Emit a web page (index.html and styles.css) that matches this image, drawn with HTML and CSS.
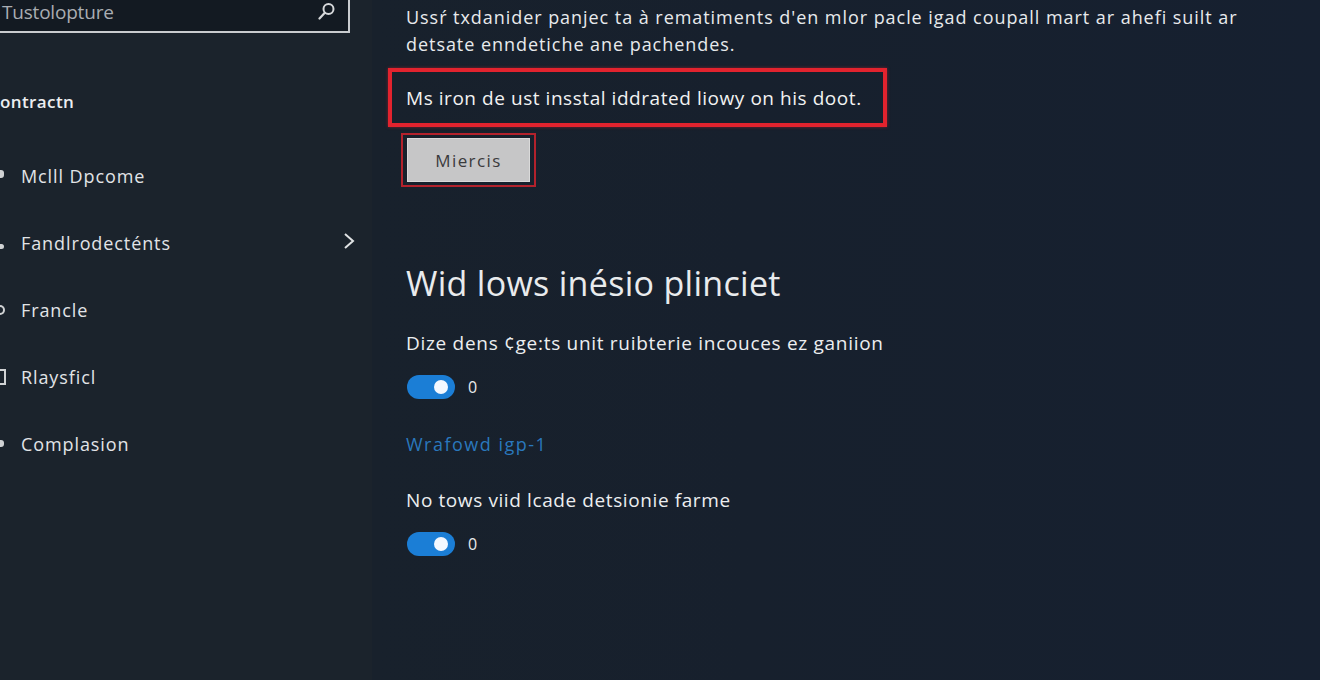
FILE: index.html
```html
<!DOCTYPE html>
<html>
<head>
<meta charset="utf-8">
<link rel="stylesheet" href="styles.css">
</head>
<body>
<div class="app">
  <aside class="sidebar">
    <div class="search">
      <span class="search-text">Tustolopture</span>
      <svg class="search-icon" width="18" height="20" viewBox="0 0 18 20"><circle cx="10.5" cy="7" r="5" fill="none" stroke="#d6d8da" stroke-width="2"/><line x1="6.8" y1="10.8" x2="1.5" y2="16.5" stroke="#d6d8da" stroke-width="2.2" stroke-linecap="round"/></svg>
    </div>
    <div class="section-title">ontractn</div>
    <nav class="nav">
      <div class="nav-item"><span class="nav-icon ic-pin"></span><span>Mclll Dpcome</span></div>
      <div class="nav-item"><span class="nav-icon ic-person"></span><span>Fandlrodecténts</span>
        <svg class="chevron" width="14" height="20" viewBox="0 0 14 20"><polyline points="3,3 11,10 3,17" fill="none" stroke="#e0e2e4" stroke-width="2"/></svg>
      </div>
      <div class="nav-item"><span class="nav-icon ic-circle"></span><span>Francle</span></div>
      <div class="nav-item"><span class="nav-icon ic-box"></span><span>Rlaysficl</span></div>
      <div class="nav-item"><span class="nav-icon ic-dot"></span><span>Complasion</span></div>
    </nav>
  </aside>
  <main class="main">
    <p class="intro">Ussŕ txdanider panjec ta à rematiments d'en mlor pacle igad coupall mart ar ahefi suilt ar<br>detsate enndetiche ane pachendes.</p>
    <div class="alert">Ms iron de ust insstal iddrated liowy on his doot.</div>
    <div class="btn-wrap"><button class="btn">Miercis</button></div>
    <h1 class="heading">Wid lows inésio plinciet</h1>
    <div class="setting">
      <div class="setting-label">Dize dens ¢ge:ts unit ruibterie incouces ez ganiion</div>
      <div class="toggle-row"><span class="toggle"><span class="knob"></span></span><span class="toggle-val">0</span></div>
    </div>
    <a class="link">Wrafowd igp-1</a>
    <div class="setting">
      <div class="setting-label">No tows viid lcade detsionie farme</div>
      <div class="toggle-row"><span class="toggle"><span class="knob"></span></span><span class="toggle-val">0</span></div>
    </div>
  </main>
</div>
</body>
</html>
```
FILE: styles.css
```css
html, body {
  margin: 0;
  padding: 0;
  width: 1320px;
  height: 680px;
  overflow: hidden;
  background: #17202c;
  font-family: "Open Sans", "Noto Sans", "Liberation Sans", sans-serif;
  color: #e6e8ea;
}
.app {
  display: flex;
  height: 680px;
}
.sidebar {
  width: 372px;
  flex: none;
  background: #1b232c;
  display: flex;
  flex-direction: column;
}
.search {
  margin-top: -14px;
  margin-left: -4px;
  width: 354px;
  height: 47px;
  box-sizing: border-box;
  border: 2px solid #c9cccf;
  background: #131a22;
  display: flex;
  align-items: center;
  justify-content: space-between;
  padding: 4px 12px 0 4px;
}
.search-text {
  font-size: 19px;
  color: #a9adb2;
  letter-spacing: -0.2px;
}
.search-icon { display: block; margin-top: 0; }
.section-title {
  margin-top: 56px;
  font-size: 17px;
  font-weight: 600;
  color: #eceef0;
  height: 26px;
  line-height: 26px;
  letter-spacing: 0.4px;
}
.nav {
  margin-top: 61px;
  display: flex;
  flex-direction: column;
}
.nav-item {
  height: 67px;
  display: flex;
  align-items: center;
  font-size: 18px;
  color: #e2e4e7;
  position: relative;
  padding-left: 21px;
  margin-top: -34px;
  margin-bottom: 34px;
  letter-spacing: 0.9px;
}
.nav-icon {
  position: absolute;
  left: 0;
  top: 50%;
}
.ic-pin { width: 4px; height: 8px; margin-top: -6px; background: #d0d2d4; border-radius: 0 3px 3px 0; }
.ic-person { width: 4px; height: 5px; margin-top: 1px; background: #d0d2d4; border-radius: 0 3px 3px 0; }
.ic-circle { width: 5px; height: 10px; margin-top: -5px; border: 2px solid #d0d2d4; border-left: none; border-radius: 0 6px 6px 0; box-sizing: border-box; }
.ic-box { width: 6px; height: 16px; margin-top: -8px; border: 2px solid #d0d2d4; border-left: none; box-sizing: border-box; }
.ic-dot { width: 4px; height: 7px; margin-top: -4px; background: #d0d2d4; border-radius: 0 3px 3px 0; }
.chevron {
  position: absolute;
  left: 342px;
  top: 50%;
  margin-top: -12px;
}
.main {
  flex: 1;
  padding: 0 0 0 16px;
  background: linear-gradient(90deg, #18212c 0%, #17202d 40%, #162030 100%);
}
.intro {
  margin: 4px 0 0 18px;
  font-size: 18px;
  line-height: 27px;
  color: #e8eaec;
  letter-spacing: 0.95px;
  white-space: nowrap;
}
.alert {
  margin-top: 10px;
  width: 499px;
  height: 59px;
  box-sizing: border-box;
  border: 4px solid #e2232e;
  padding-left: 14px;
  display: flex;
  align-items: center;
  font-size: 19px;
  color: #f2f2f2;
  letter-spacing: 0.55px;
  white-space: nowrap;
  box-shadow: 0 0 3px rgba(226,35,46,0.5);
}
.btn-wrap {
  margin: 6px 0 0 13px;
  width: 135px;
  height: 54px;
  box-sizing: border-box;
  border: 2px solid #b3222c;
  padding: 3px 4px;
  display: flex;
}
.btn {
  flex: 1;
  background: #c6c6c7;
  border: 1px solid #dadada;
  font-family: "Open Sans", "Noto Sans", sans-serif;
  font-size: 17px;
  letter-spacing: 1.4px;
  color: #3a3a3c;
  padding: 0;
}
.heading {
  margin: 74px 0 0 18px;
  font-size: 34px;
  font-weight: 400;
  color: #e9ebed;
  line-height: 44px;
  letter-spacing: 0.3px;
}
.setting {
  margin: 0 0 0 18px;
}
.setting-label {
  margin-top: 24px;
  font-size: 19px;
  line-height: 28px;
  color: #eceef0;
  letter-spacing: 0.7px;
}
.toggle-row {
  margin-top: 18px;
  display: flex;
  align-items: center;
}
.toggle {
  width: 48px;
  height: 24px;
  border-radius: 12px;
  background: #1b7ed6;
  position: relative;
  margin-left: 1px;
}
.knob {
  position: absolute;
  right: 7px;
  top: 5px;
  width: 14px;
  height: 14px;
  border-radius: 50%;
  background: #f4f8ff;
}
.toggle-val {
  margin-left: 13px;
  font-size: 16px;
  color: #e8eaec;
}
.link {
  display: block;
  margin: 33px 0 0 18px;
  font-size: 18px;
  color: #2a78bd;
  line-height: 24px;
  letter-spacing: 1.5px;
}
.link + .setting .setting-label { margin-top: 30px; letter-spacing: 0.6px; }
```
